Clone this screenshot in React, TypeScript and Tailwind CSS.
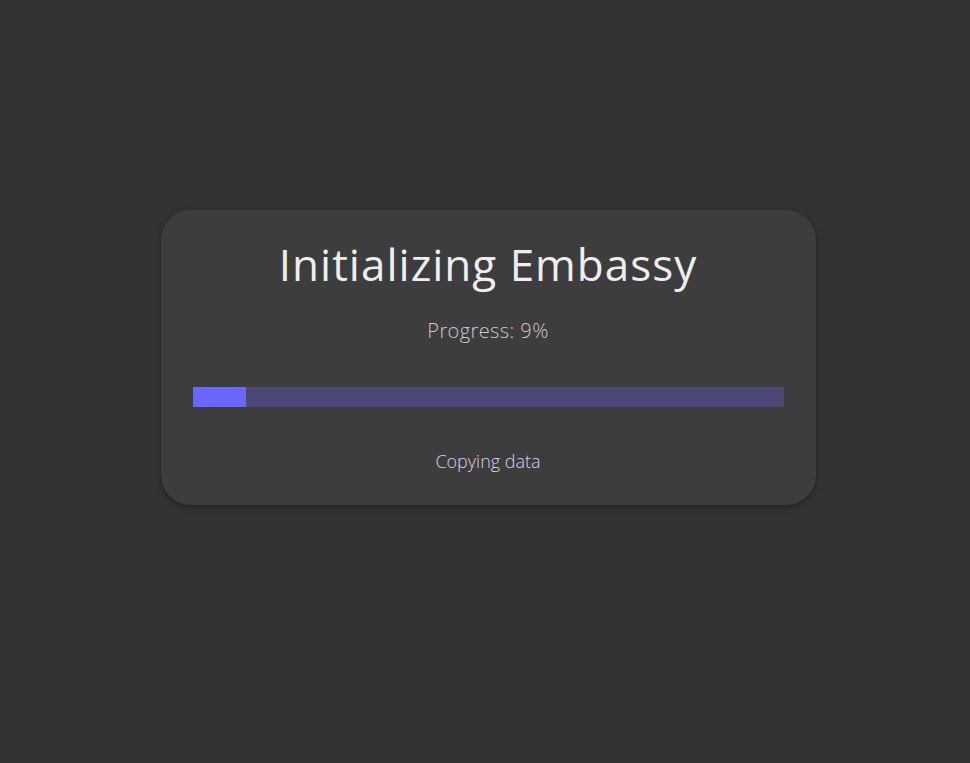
import React from 'react';

export default function App() {
  const progress = 9;
  return (
    <div className="min-h-[763px] w-full bg-[#333333] pt-[210px] pl-[6px]">
      <div className="mx-auto flex w-[655px] flex-col items-center rounded-[30px] bg-[#3d3d3d] px-8 pt-[26px] pb-[31px] shadow-[0_2px_6px_rgba(0,0,0,0.35)]">
        <h1 className="text-[44px] leading-[56px] tracking-[1px] text-[#eeeeee] font-['Open_Sans',sans-serif]">
          Initializing Embassy
        </h1>
        <p className="mt-[25px] text-[20px] leading-[28px] font-light tracking-[0.4px] text-[#c9c9d2] font-['Open_Sans',sans-serif]">
          Progress: {progress}%
        </p>
        <div className="mt-[42px] h-5 w-full bg-[#4b4878]">
          <div className="h-full bg-[#6b66ff]" style={{ width: `${progress}%` }} />
        </div>
        <p className="mt-[41px] text-[18px] leading-[26px] font-light text-[#d2d4e4] font-['Open_Sans',sans-serif]">
          Copying data
        </p>
      </div>
    </div>
  );
}
